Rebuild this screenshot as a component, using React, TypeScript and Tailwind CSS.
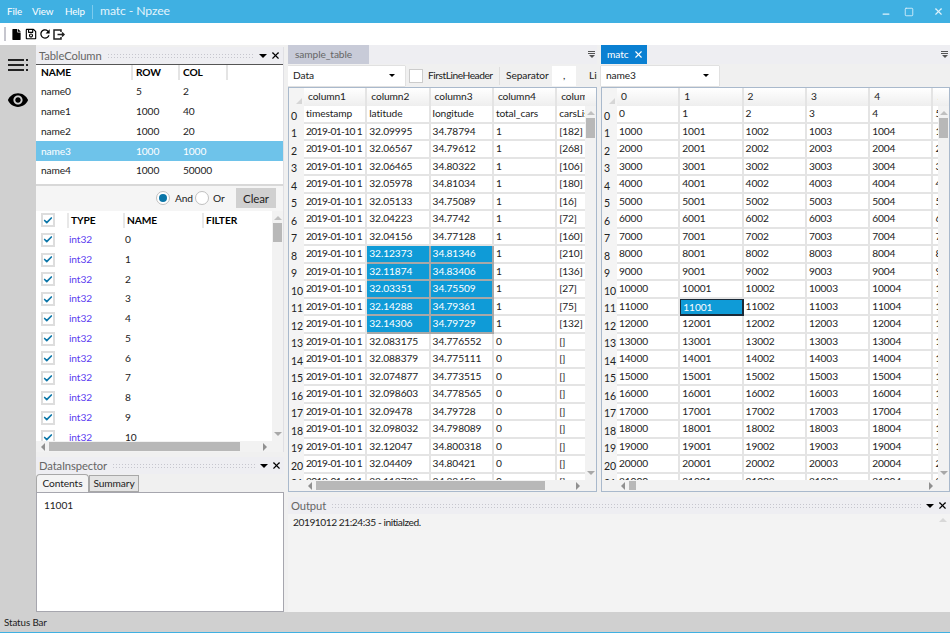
import React from 'react';
import { FaFile, FaRegSave } from 'react-icons/fa';
import { MdRefresh, MdRemoveRedEye } from 'react-icons/md';
import { X, Minus, Square, Check } from 'lucide-react';

const sampleRows: string[][] = [
  ['timestamp', 'latitude', 'longitude', 'total_cars', 'carsList'],
  ...[
    ['32.09995', '34.78794', '1', '[182]'],
    ['32.06567', '34.79612', '1', '[268]'],
    ['32.06465', '34.80322', '1', '[106]'],
    ['32.05978', '34.81034', '1', '[180]'],
    ['32.05133', '34.75089', '1', '[16]'],
    ['32.04223', '34.7742', '1', '[72]'],
    ['32.04156', '34.77128', '1', '[160]'],
    ['32.12373', '34.81346', '1', '[210]'],
    ['32.11874', '34.83406', '1', '[136]'],
    ['32.03351', '34.75509', '1', '[27]'],
    ['32.14288', '34.79361', '1', '[75]'],
    ['32.14306', '34.79729', '1', '[132]'],
    ['32.083175', '34.776552', '0', '[]'],
    ['32.088379', '34.775111', '0', '[]'],
    ['32.074877', '34.773515', '0', '[]'],
    ['32.098603', '34.778565', '0', '[]'],
    ['32.09478', '34.79728', '0', '[]'],
    ['32.098032', '34.798089', '0', '[]'],
    ['32.12047', '34.800318', '0', '[]'],
    ['32.04409', '34.80421', '0', '[]'],
    ['32.113723', '34.82452', '0', '[]'],
  ].map((r) => ['2019-01-10 1', ...r]),
];

const matcRows: string[][] = Array.from({ length: 22 }, (_, r) =>
  Array.from({ length: 6 }, (_, c) => String(r * 1000 + c)),
);

const tables = [
  ['name0', '5', '2'],
  ['name1', '1000', '40'],
  ['name2', '1000', '20'],
  ['name3', '1000', '1000'],
  ['name4', '1000', '50000'],
];

function DockHeader({ title }: { title: string }) {
  return (
    <div className="flex h-[17px] shrink-0 items-center bg-[#eeeef2] pl-[3px] pr-[2px] text-[#666]">
      <span className="text-[11.2px] leading-[15px]">{title}</span>
      <div className="mx-[5px] h-[5px] flex-1 bg-[radial-gradient(#c6c6ce_1px,transparent_1px)] bg-[length:3px_3px]" />
      <span className="mr-[3px] h-0 w-0 border-x-[4px] border-t-[4px] border-x-transparent border-t-black" />
      <X size={11} strokeWidth={2.5} className="text-black" />
    </div>
  );
}

function ScrollArrow({ dir }: { dir: 'up' | 'down' | 'left' | 'right' }) {
  if (dir === 'up') return <span className="h-0 w-0 border-x-[4px] border-b-[4px] border-x-transparent border-b-[#c0c0c0]" />;
  if (dir === 'down') return <span className="h-0 w-0 border-x-[4px] border-t-[4px] border-x-transparent border-t-[#a8a8a8]" />;
  if (dir === 'left') return <span className="h-0 w-0 border-y-[4px] border-r-[4px] border-y-transparent border-r-[#909090]" />;
  return <span className="h-0 w-0 border-y-[4px] border-l-[4px] border-y-transparent border-l-[#909090]" />;
}

function VScroll({ thumbHeight }: { thumbHeight: string }) {
  return (
    <div className="flex min-h-0 w-[11px] flex-1 shrink-0 flex-col items-center bg-[#f2f2f2] pt-[5px] pb-[5px]">
      <ScrollArrow dir="up" />
      <div className={`mt-[3px] w-[9px] bg-[#b8b8b8] ${thumbHeight}`} />
      <div className="flex-1" />
      <ScrollArrow dir="down" />
    </div>
  );
}

function HScroll({ thumb, inset }: { thumb: string; inset: string }) {
  return (
    <div className="flex h-[11px] shrink-0 bg-[#f2f2f2]">
      <div className={`flex flex-1 items-center pr-[5px] ${inset}`}>
        <ScrollArrow dir="left" />
        <div className={`ml-[4px] h-[9px] bg-[#b8b8b8] ${thumb}`} />
        <div className="flex-1" />
        <ScrollArrow dir="right" />
      </div>
      <div className="w-[11px] shrink-0" />
    </div>
  );
}

interface GridProps {
  headers: string[];
  rows: string[][];
  selected?: string[];
  current?: string;
  thumb: string;
}

function DataGrid({ headers, rows, selected = [], current, thumb }: GridProps) {
  return (
    <div className="flex min-h-0 flex-1 flex-col border border-[#a9b9cc] bg-white">
      <div className="flex min-h-0 flex-1">
        <div className="min-w-0 flex-1 overflow-hidden">
          <div className="flex h-[18px] w-[800px] bg-gradient-to-b from-white to-[#eeeeee]">
            <div className="relative w-[15px] shrink-0 bg-[#f4f4f4]">
              <span className="absolute right-[2px] bottom-[2px] h-0 w-0 border-b-[6px] border-l-[6px] border-b-[#d6d6d6] border-l-transparent" />
            </div>
            {headers.map((h, i) => (
              <div key={i} className="h-full w-[63.3px] shrink-0 border-r-2 border-[#e4e4e4] pl-[4px] leading-[17px]">
                {h}
              </div>
            ))}
          </div>
          {rows.map((row, r) => (
            <div key={r} className="flex h-[17.5px] w-[800px]">
              <div className="flex w-[15px] shrink-0 items-end bg-[#f4f4f4] pl-[2px] text-[10.5px] leading-[15px]">{r}</div>
              {row.map((cell, c) => {
                const id = `${r}:${c}`;
                const isCurrent = id === current;
                const isSel = selected.includes(id);
                return (
                  <div
                    key={c}
                    className={`h-full w-[63.3px] shrink-0 overflow-hidden border-r-2 border-b-2 pl-[2px] leading-[14px] whitespace-nowrap ${
                      cell.startsWith('2019') ? 'tracking-[-0.6px]' : ''
                    } ${
                      isCurrent
                        ? 'border-l border-t border-[#1b2a38] bg-[#0f9bd7] text-white'
                        : isSel
                          ? 'border-[#a8a8a8] bg-[#0f9bd7] text-white'
                          : 'border-[#e4e4e4]'
                    }`}
                  >
                    {cell}
                  </div>
                );
              })}
            </div>
          ))}
        </div>
        <div className="flex w-[11px] shrink-0 flex-col">
          <div className="h-[18px] shrink-0 bg-gradient-to-b from-white to-[#eeeeee]" />
          <VScroll thumbHeight="h-[20px]" />
        </div>
      </div>
      <HScroll thumb={thumb} inset="pl-[19px]" />
    </div>
  );
}

function Combo({ label, width }: { label: string; width: string }) {
  return (
    <div className={`flex h-[20px] shrink-0 items-center justify-between bg-white px-[5px] shadow-[0_0_1px_#999] ${width}`}>
      <span>{label}</span>
      <span className="mr-[5px] h-0 w-0 border-x-[3px] border-t-[3px] border-x-transparent border-t-black" />
    </div>
  );
}

function TabMenu() {
  return (
    <div className="flex flex-col items-center gap-[1px]">
      <span className="h-[1px] w-[7px] bg-[#555]" />
      <span className="h-[1px] w-[7px] bg-[#555]" />
      <span className="h-0 w-0 border-x-[3.5px] border-t-[3px] border-x-transparent border-t-[#555]" />
    </div>
  );
}

function Tick({ y }: { y: string }) {
  return (
    <div className={`flex h-[14px] w-[14px] shrink-0 items-center justify-center border-2 border-[#dddddd] bg-white ${y}`}>
      <Check size={11} strokeWidth={4} className="text-[#0b76a8]" />
    </div>
  );
}

export default function App() {
  const selected = [8, 9, 10, 11, 12].flatMap((r) => [`${r}:1`, `${r}:2`]);

  return (
    <div className="flex h-[633px] w-[950px] flex-col overflow-hidden bg-[#f0f0f0] font-['Lato',sans-serif] text-[10.2px] tracking-[-0.1px] text-[#222]">
      {/* title bar */}
      <div className="flex h-[23px] shrink-0 items-center bg-[#3fb0e2] pl-[7px] text-[9.8px] text-white">
        <span className="w-[14px]">File</span>
        <span className="ml-[11px] w-[21px]">View</span>
        <span className="ml-[12px] w-[20px]">Help</span>
        <span className="mx-[7px] h-[14px] w-px bg-[#7ccbee]" />
        <span className="text-[12.2px] text-[#e3f4fc]">matc - Npzee</span>
        <div className="ml-auto flex items-center text-[#dff2fb]">
          <Minus size={10} strokeWidth={3} className="mt-[5px] mr-[13px]" />
          <Square size={10} strokeWidth={2} className="mr-[19px]" />
          <X size={11} strokeWidth={2.5} className="mr-[6px]" />
        </div>
      </div>

      {/* toolbar */}
      <div className="flex h-[22px] shrink-0 items-center bg-white pl-[4px] text-black">
        <div className="mr-[6px] h-[14px] w-[2px] bg-[radial-gradient(#c6c6ce_1px,transparent_1px)] bg-[length:2px_2px]" />
        <FaFile size={11} className="-ml-[1px]" />
        <FaRegSave size={12} className="ml-[3px]" />
        <MdRefresh size={14} className="ml-[1px]" />
        <svg width="12" height="11" viewBox="0 0 12 11" fill="none" stroke="#222" strokeWidth="1.5" className="ml-[1px]">
          <path d="M8 3V1H1v9h7V8" />
          <path d="M4.5 5.5H11M9 3.5l2 2-2 2" />
        </svg>
      </div>

      <div className="flex min-h-0 flex-1">
        {/* side strip */}
        <div className="flex w-[36px] shrink-0 flex-col items-center bg-[#d0d0d0] pt-[14px]">
          <svg width="21" height="12" viewBox="0 0 21 12" fill="#222">
            <rect x="0" y="0" width="16" height="2" />
            <rect x="0" y="5" width="16" height="2" />
            <rect x="0" y="10" width="16" height="2" />
            <rect x="18" y="0" width="2" height="2" />
            <rect x="18" y="5" width="2" height="2" />
            <rect x="18" y="10" width="2" height="2" />
          </svg>
          <MdRemoveRedEye size={22} className="mt-[18px] text-black" />
        </div>

        {/* left docks */}
        <div className="flex w-[248px] shrink-0 flex-col pt-[2px]">
          <div className="flex h-[405px] flex-col border-r border-[#e0e0e4]">
            <DockHeader title="TableColumn" />
            <div className="border-t border-[#555] bg-white pb-[3px]">
              <div className="flex h-[17px] items-start font-bold text-black">
                <div className="w-[97px] border-r-2 border-[#e4e4e4] pl-[5px] leading-[15px]">NAME</div>
                <div className="w-[47px] border-r-2 border-[#e4e4e4] pl-[3px] leading-[15px]">ROW</div>
                <div className="w-[48px] border-r-2 border-[#e4e4e4] pl-[3px] leading-[15px]">COL</div>
              </div>
              {tables.map((t) => (
                <div key={t[0]} className={`flex h-[19.8px] items-center ${t[0] === 'name3' ? 'bg-[#6ec3ea] text-white' : ''}`}>
                  <div className="w-[97px] pl-[5px]">{t[0]}</div>
                  <div className="w-[47px] pl-[3px]">{t[1]}</div>
                  <div className="pl-[3px]">{t[2]}</div>
                </div>
              ))}
            </div>
            <div className="h-[2px] shrink-0 bg-[#d8d8d8]" />
            <div className="flex h-[25px] shrink-0 items-center bg-[#f5f5f5]">
              <div className="ml-[120px] flex h-[14px] w-[14px] items-center justify-center rounded-full border border-[#c0c0c0] bg-white">
                <span className="h-[8px] w-[8px] rounded-full bg-[#0b76a8]" />
              </div>
              <span className="ml-[5px] w-[19px]">And</span>
              <span className="ml-[1px] h-[14px] w-[14px] rounded-full border border-[#c0c0c0] bg-white" />
              <span className="ml-[4px] w-[23px]">Or</span>
              <div className="flex h-[20px] w-[40px] items-center justify-center bg-[#d0d0d0] text-[11.5px]">Clear</div>
            </div>
            <div className="flex min-h-0 flex-1 flex-col bg-white">
              <div className="flex min-h-0 flex-1">
                <div className="min-w-0 flex-1 overflow-hidden">
                  <div className="flex h-[19px] items-center font-bold text-black">
                    <Tick y="ml-[5px]" />
                    <div className="ml-[12px] w-[56px] border-l-2 border-[#e8e8e8] pl-[2px] leading-[15px]">TYPE</div>
                    <div className="w-[79px] border-l-2 border-[#e8e8e8] pl-[2px] leading-[15px]">NAME</div>
                    <div className="border-l-2 border-[#e8e8e8] pl-[2px] leading-[15px]">FILTER</div>
                  </div>
                  {Array.from({ length: 11 }, (_, i) => (
                    <div key={i} className="flex h-[19.75px] items-center">
                      <Tick y="ml-[5px]" />
                      <div className="ml-[14px] w-[56px] text-[#5b3df0]">int32</div>
                      <div>{i}</div>
                    </div>
                  ))}
                </div>
                <div className="flex w-[11px] shrink-0 flex-col">
                  <VScroll thumbHeight="h-[19px]" />
                </div>
              </div>
              <HScroll thumb="w-[191px]" inset="pl-[5px]" />
            </div>
          </div>

          <div className="mt-[5px] flex min-h-0 flex-1 flex-col">
            <DockHeader title="DataInspector" />
            <div className="flex h-[18px] shrink-0 items-end">
              <div className="flex h-[18px] w-[53px] items-center justify-center rounded-t-sm border border-b-0 border-[#a8a8a8] bg-[#f4f4f4]">Contents</div>
              <div className="flex h-[17px] w-[50px] items-center justify-center border border-[#a8a8a8] bg-[#e4e4e4]">Summary</div>
            </div>
            <div className="flex-1 border border-[#a6a6ae] bg-white px-[7px] pt-[5px]">11001</div>
          </div>
        </div>

        {/* center */}
        <div className="ml-[4px] flex min-w-0 flex-1 flex-col">
          <div className="flex h-[447px] shrink-0 gap-[4px]">
            <div className="flex w-[309px] shrink-0 flex-col">
              <div className="flex h-[19px] shrink-0 items-center justify-between bg-[#eeeef2]">
                <div className="flex h-full w-[81px] items-center bg-[#c8cbd8] pl-[7px] text-[#666]">sample_table</div>
                <div className="mr-[2px]"><TabMenu /></div>
              </div>
              <div className="flex h-[23px] shrink-0 items-center overflow-hidden">
                <Combo label="Data" width="w-[117px]" />
                <span className="ml-[4px] h-[14px] w-[14px] shrink-0 border border-[#cccccc] bg-white" />
                <span className="ml-[5px] w-[66px] shrink-0 tracking-[-0.45px] whitespace-nowrap">FirstLineHeader</span>
                <span className="ml-[5px] h-[18px] w-px shrink-0 bg-[#dddddd]" />
                <span className="ml-[6px] w-[42px] shrink-0">Separator</span>
                <span className="ml-[4px] flex h-[20px] w-[24px] shrink-0 items-center justify-center bg-white">,</span>
                <span className="ml-[13px] shrink-0">Line</span>
              </div>
              <DataGrid
                headers={['column1', 'column2', 'column3', 'column4', 'column5']}
                rows={sampleRows}
                selected={selected}
                thumb="w-[229px]"
              />
            </div>
            <div className="flex min-w-0 flex-1 flex-col">
              <div className="flex h-[19px] shrink-0 items-center justify-between bg-[#eeeef2]">
                <div className="flex h-full w-[46px] items-center justify-between bg-[#0a80d2] pr-[3px] pl-[6px] text-white">
                  <span>matc</span>
                  <X size={11} strokeWidth={2.5} />
                </div>
                <div className="mr-[2px]"><TabMenu /></div>
              </div>
              <div className="flex h-[23px] shrink-0 items-center">
                <Combo label="name3" width="w-[118px]" />
              </div>
              <DataGrid
                headers={['0', '1', '2', '3', '4', '5']}
                rows={matcRows}
                current="11:1"
                thumb="w-[7px]"
              />
            </div>
          </div>

          {/* output */}
          <div className="mt-[5px] flex min-h-0 flex-1 flex-col">
            <DockHeader title="Output" />
            <div className="flex flex-1 justify-between bg-[#f3f3f3] pt-[1px] pl-[5px]">
              <span className="tracking-[-0.45px]">20191012 21:24:35 - initialzed.</span>
              <span className="mt-[3px] mr-[3px] h-0 w-0 border-x-[4px] border-b-[4px] border-x-transparent border-b-[#d8d8d8]" />
            </div>
          </div>
        </div>
      </div>

      {/* status bar */}
      <div className="flex h-[20px] shrink-0 items-center bg-[#d0d0d0] pl-[4px] text-[9.8px]">Status Bar</div>
      <div className="h-px shrink-0 bg-[#3fb0e2]" />
    </div>
  );
}
